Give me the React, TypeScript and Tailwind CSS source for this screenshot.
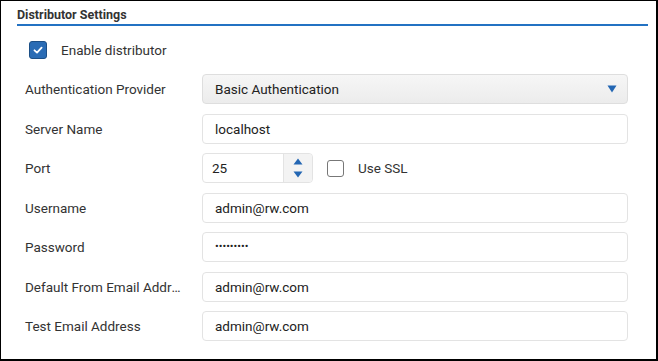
import React from 'react';

function Label({ children }: { children: React.ReactNode }) {
  return (
    <div className="w-[201px] shrink-0 truncate pl-[24px] pr-[17px] text-[13.5px] text-[#333]">
      {children}
    </div>
  );
}

function TextBox({ value, small }: { value: string; small?: boolean }) {
  return (
    <div
      className={
        small
          ? 'flex h-[30px] w-[426px] items-center rounded-[4px] border border-[#e3e3e3] bg-white px-3 text-[11px] text-[#222]'
          : 'flex h-[30px] w-[426px] items-center rounded-[4px] border border-[#e3e3e3] bg-white px-3 text-[13.5px] text-[#222]'
      }
    >
      {value}
    </div>
  );
}

function Row({ label, children }: { label: string; children: React.ReactNode }) {
  return (
    <div className="flex h-[30px] items-center">
      <Label>{label}</Label>
      {children}
    </div>
  );
}

export default function App() {
  return (
    <div className="h-[361px] w-[658px] border-t border-l border-r-2 border-b-2 border-black bg-white font-['Roboto',sans-serif]">
      <div className="pl-[16px] pr-[8px] pt-[6px]">
        <div className="border-b-2 border-[#2372c3] pb-[1px] text-[12.5px] font-bold leading-[16px] text-[#333]">
          Distributor Settings
        </div>
      </div>

      <div className="mt-[14px] flex items-center pl-[28px]">
        <div className="flex h-[18px] w-[18px] items-center justify-center rounded-[3px] border border-[#1c4f86] bg-[#2a6cb5]">
          <svg width="12" height="12" viewBox="0 0 12 12">
            <path d="M2.5 6.3 L5 8.6 L9.6 3.6" stroke="white" strokeWidth="1.8" fill="none" strokeLinecap="round" strokeLinejoin="round" />
          </svg>
        </div>
        <span className="ml-[14px] text-[13.5px] text-[#333]">Enable distributor</span>
      </div>

      <div className="mt-[14px] flex flex-col gap-[9.5px]">
        <Row label="Authentication Provider">
          <div className="flex h-[30px] w-[426px] items-center justify-between rounded-[4px] border border-[#dedede] bg-gradient-to-b from-[#f6f6f6] to-[#ececec] pl-3 pr-[10px] text-[13.5px] text-[#222]">
            <span>Basic Authentication</span>
            <svg width="10" height="8" viewBox="0 0 10 8">
              <path d="M0.5 0.5 H9.5 L5 7.5 Z" fill="#2366b3" />
            </svg>
          </div>
        </Row>
        <Row label="Server Name">
          <TextBox value="localhost" />
        </Row>
        <Row label="Port">
          <div className="flex h-[30px] w-[111px] rounded-[4px] border border-[#e3e3e3] bg-white">
            <div className="flex flex-1 items-center px-[9px] text-[13.5px] text-[#222]">25</div>
            <div className="flex w-[29px] flex-col items-center justify-center gap-[6px] rounded-r-[4px] border-l border-[#e3e3e3] bg-[#f3f3f3]">
              <svg width="10" height="7" viewBox="0 0 10 7">
                <path d="M5 0.5 L9.5 6.5 H0.5 Z" fill="#2366b3" />
              </svg>
              <svg width="10" height="7" viewBox="0 0 10 7">
                <path d="M0.5 0.5 H9.5 L5 6.5 Z" fill="#2366b3" />
              </svg>
            </div>
          </div>
          <div className="ml-[14px] h-[17px] w-[17px] rounded-[3px] border border-[#777] bg-white" />
          <span className="ml-[14px] text-[13.5px] text-[#333]">Use SSL</span>
        </Row>
        <Row label="Username">
          <TextBox value="admin@rw.com" />
        </Row>
        <Row label="Password">
          <TextBox value="•••••••••" small />
        </Row>
        <Row label="Default From Email Address">
          <TextBox value="admin@rw.com" />
        </Row>
        <Row label="Test Email Address">
          <TextBox value="admin@rw.com" />
        </Row>
      </div>
    </div>
  );
}
